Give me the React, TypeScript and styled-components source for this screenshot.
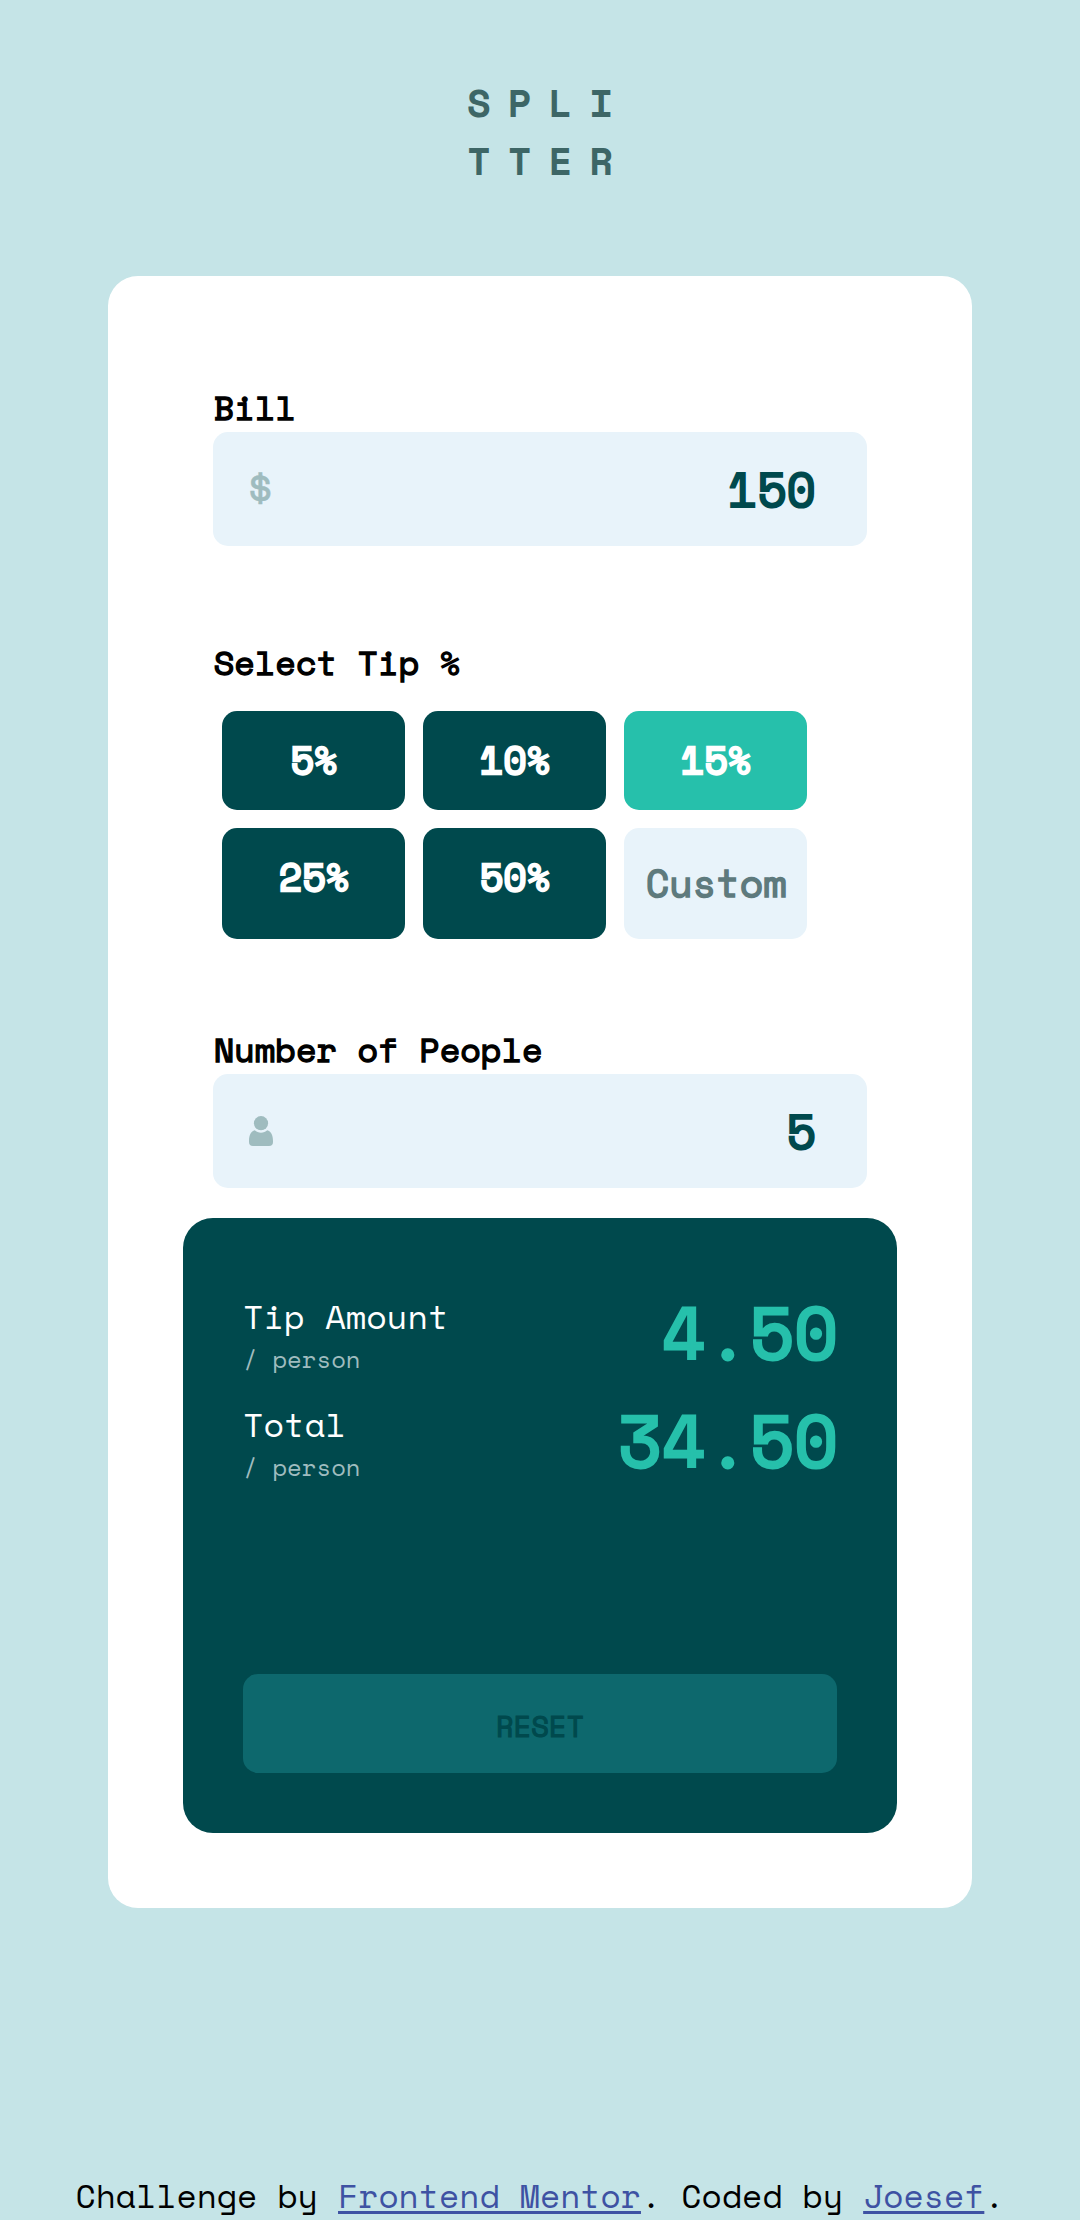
import React, { useState } from 'react';
import styled, { createGlobalStyle, css } from 'styled-components';

const GlobalStyle = createGlobalStyle`
  *, *::before, *::after { box-sizing: border-box; }
  body {
    margin: 0;
    background: #c5e4e7;
    font-family: "Space Mono", "Liberation Mono", monospace;
  }
  button, input { font-family: inherit; border: 0; outline: 0; margin: 0; }
`;

/* Semi-bold look: the regular face thickened by a proportional outline. */
const emphasis = css`
  font-weight: 400;
  -webkit-text-stroke: 0.0417em currentColor;
`;

const Page = styled.div`
  display: flex;
  flex-direction: column;
  align-items: center;
  height: 2220px;
  overflow: hidden;
  padding-top: 73px;
`;

const Logo = styled.h1`
  margin: 0 0 87px;
  padding-left: 17px;
  font-size: 39px;
  line-height: 58px;
  font-weight: 700;
  letter-spacing: 16.9px;
  color: #3d6666;
`;

const LogoLine = styled.span`
  display: block;
`;

const Card = styled.main`
  width: 864px;
  height: 1632px;
  padding: 106px 75px 75px;
  border-radius: 30px;
  background: #fff;
`;

const Form = styled.div`
  padding: 0 30px;
`;

const Label = styled.label`
  display: block;
  padding-left: 0.7px;
  font-size: 33.6px;
  line-height: 50px;
  color: #000;
  ${emphasis}
`;

const Field = styled.div`
  display: flex;
  align-items: center;
  justify-content: space-between;
  height: 114px;
  padding: 0 51px 0 36px;
  border-radius: 15px;
  background: #e8f3fa;
`;

const DollarSign = styled.span`
  margin: 0 0 4px -3px;
  font-size: 48px;
  line-height: 70px;
  -webkit-text-stroke: 0.4px currentColor;
  color: #9fbcbf;
`;

const FieldInput = styled.input`
  width: 400px;
  height: 84px;
  padding: 0 0 2px;
  background: transparent;
  font-size: 48px;
  text-align: right;
  color: #00494d;
  ${emphasis}
`;

const TipSection = styled.section`
  padding: 91px 0 85px;
`;

const TipGrid = styled.div`
  display: grid;
  grid-template-columns: repeat(3, 183px);
  grid-template-rows: 99px 111px;
  gap: 18px;
  margin: 24px 0 0 9px;
`;

const TipButton = styled.button<{ $active?: boolean }>`
  display: flex;
  justify-content: center;
  padding: 20px 0 0 1px;
  border-radius: 15px;
  background: ${(p) => (p.$active ? '#26c0ab' : '#00494d')};
  color: #fff;
  font-size: 38.4px;
  line-height: 57px;
  ${emphasis}
  -webkit-text-stroke-width: 0.06em;
`;

const CustomTip = styled.input`
  width: 183px;
  height: 111px;
  padding: 0 0 2px 1.6px;
  border-radius: 15px;
  background: #e8f3fa;
  font-size: 38.4px;
  text-align: center;
  color: #00494d;
  ${emphasis}
  &::placeholder {
    color: #5e7a7d;
    opacity: 1;
  }
`;

const Results = styled.section`
  display: flex;
  flex-direction: column;
  height: 615px;
  margin-top: 30px;
  padding: 60px;
  border-radius: 30px;
  background: #00494d;
`;

const ResultRow = styled.div`
  display: flex;
  justify-content: space-between;
  height: 108px;
`;

const ResultText = styled.div`
  padding-top: 13px;
`;

const ResultTitle = styled.div`
  font-size: 33.6px;
  line-height: 50px;
  color: #fff;
`;

const ResultUnit = styled.div`
  font-size: 24px;
  line-height: 37px;
  color: #9fbcbf;
`;

const Amount = styled.output`
  margin-right: -1px;
  font-size: 72px;
  line-height: 107px;
  color: #26c0ab;
  ${emphasis}
`;

const ResetButton = styled.button`
  height: 99px;
  margin-top: auto;
  padding: 5px 0 0;
  border-radius: 15px;
  background: #0d686d;
  color: #00494d;
  font-size: 28.8px;
  ${emphasis}
`;

const Footer = styled.footer`
  margin-top: 263px;
  font-size: 33px;
  line-height: 50px;
  white-space: nowrap;
  color: #000;
`;

const FooterLink = styled.a`
  color: #3e52a3;
  text-decoration: underline;
  text-decoration-thickness: 3px;
  text-underline-offset: 3px;
  text-decoration-skip-ink: none;
`;

const PersonIcon = () => (
  <svg width="24" height="30" viewBox="0 0 24 30" fill="#9fbcbf" aria-hidden="true">
    <circle cx="12" cy="7.2" r="7.1" />
    <path d="M5.8 14.3C8.8 17.6 15.2 17.6 18.2 14.3C22 15.1 24 19.2 24 25V26Q24 30 20 30H4Q0 30 0 26V25C0 19.2 2 15.1 5.8 14.3Z" />
  </svg>
);

const PRESETS = [5, 10, 15, 25, 50];

export default function App() {
  const [bill, setBill] = useState('150');
  const [people, setPeople] = useState('5');
  const [tip, setTip] = useState(15);
  const [custom, setCustom] = useState('');

  const rate = (custom ? Number(custom) || 0 : tip) / 100;
  const count = Number(people) || 1;
  const base = Number(bill) || 0;

  const reset = () => {
    setBill('');
    setPeople('');
    setCustom('');
    setTip(0);
  };

  return (
    <Page>
      <GlobalStyle />
      <Logo>
        <LogoLine>SPLI</LogoLine>
        <LogoLine>TTER</LogoLine>
      </Logo>
      <Card>
        <Form>
          <Label htmlFor="bill">Bill</Label>
          <Field>
            <DollarSign>$</DollarSign>
            <FieldInput id="bill" value={bill} onChange={(e) => setBill(e.target.value)} />
          </Field>
          <TipSection>
            <Label as="div">Select Tip %</Label>
            <TipGrid>
              {PRESETS.map((value) => (
                <TipButton
                  key={value}
                  $active={!custom && tip === value}
                  onClick={() => {
                    setTip(value);
                    setCustom('');
                  }}
                >
                  {value}%
                </TipButton>
              ))}
              <CustomTip placeholder="Custom" value={custom} onChange={(e) => setCustom(e.target.value)} />
            </TipGrid>
          </TipSection>
          <Label htmlFor="people">Number of People</Label>
          <Field>
            <PersonIcon />
            <FieldInput id="people" value={people} onChange={(e) => setPeople(e.target.value)} />
          </Field>
        </Form>
        <Results>
          <ResultRow>
            <ResultText>
              <ResultTitle>Tip Amount</ResultTitle>
              <ResultUnit>/ person</ResultUnit>
            </ResultText>
            <Amount>{((base * rate) / count).toFixed(2)}</Amount>
          </ResultRow>
          <ResultRow>
            <ResultText>
              <ResultTitle>Total</ResultTitle>
              <ResultUnit>/ person</ResultUnit>
            </ResultText>
            <Amount>{((base * (1 + rate)) / count).toFixed(2)}</Amount>
          </ResultRow>
          <ResetButton onClick={reset}>RESET</ResetButton>
        </Results>
      </Card>
      <Footer>
        Challenge by <FooterLink href="#">Frontend Mentor</FooterLink>. Coded by{' '}
        <FooterLink href="#">Joesef</FooterLink>.
      </Footer>
    </Page>
  );
}
